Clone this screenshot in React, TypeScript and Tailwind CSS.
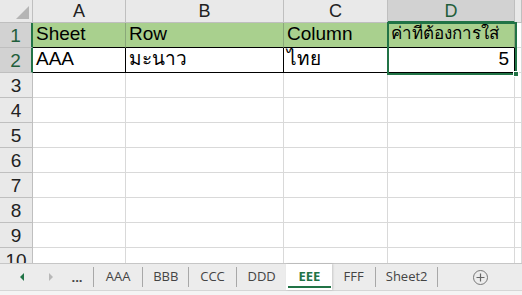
import React from "react";

const FONT = { fontFamily: '"Liberation Sans", "Noto Sans", "DejaVu Sans", sans-serif' };

const cols = ["A", "B", "C", "D", ""];

function ColHeader({ label, active }: { label: string; active?: boolean }) {
  return (
    <div
      className={
        "flex items-center justify-center border-r border-[#bfbfbf] text-[18px] leading-none " +
        (active
          ? "bg-[#d2d2d2] text-[#1f5e3b] border-b-2 border-b-[#217346]"
          : "bg-[#e9e9e9] text-[#222] border-b border-b-[#bfbfbf]")
      }
    >
      {label}
    </div>
  );
}

function RowHeader({ n, active }: { n: number; active?: boolean }) {
  return (
    <div
      className={
        "flex items-center justify-center border-b border-[#bfbfbf] text-[19px] leading-none " +
        (active
          ? "bg-[#d2d2d2] text-[#1f5e3b] border-r-2 border-r-[#217346]"
          : "bg-[#e9e9e9] text-[#222] border-r border-r-[#bfbfbf]")
      }
    >
      {n}
    </div>
  );
}

function Sheet() {
  const rows = [3, 4, 5, 6, 7, 8, 9, 10];
  const head = [
    { t: "Sheet", s: "text-[19px]" },
    { t: "Row", s: "text-[19px]" },
    { t: "Column", s: "text-[19px]" },
    { t: "ค่าที่ต้องการใส่", s: "text-[17px]" },
  ];
  return (
    <div className="relative h-[263px] overflow-hidden bg-white" style={FONT}>
      <div className="grid grid-cols-[33px_93px_158px_104px_127px_1fr] grid-rows-[23px_repeat(10,25px)]">
        {/* corner */}
        <div className="relative bg-[#e9e9e9] border-r border-b border-[#bfbfbf]">
          <div className="absolute right-[3px] bottom-[3px] w-0 h-0 border-l-[13px] border-l-transparent border-b-[13px] border-b-[#b5b5b5]" />
        </div>
        {cols.map((c) => (
          <ColHeader key={c || "E"} label={c} active={c === "D"} />
        ))}

        {/* row 1 */}
        <RowHeader n={1} active />
        {head.map((h) => (
          <div
            key={h.t}
            className={
              "flex items-end pb-[2px] pl-[3px] bg-[#a9d08e] border-r border-b border-r-[#8aa879] border-b-black leading-[22px] text-black whitespace-nowrap overflow-hidden " +
              h.s
            }
          >
            {h.t}
          </div>
        ))}
        <div className="border-r border-b border-[#d9d9d9]" />

        {/* row 2 */}
        <RowHeader n={2} active />
        {["AAA", "มะนาว", "ไทย"].map((t) => (
          <div
            key={t}
            className="flex items-end pb-[2px] pl-[3px] border-r border-b border-black text-[19px] leading-[22px] text-black whitespace-nowrap"
          >
            {t}
          </div>
        ))}
        <div className="flex items-end justify-end pb-[2px] pr-[5px] border-r border-b border-black text-[19px] leading-[22px] text-black">
          5
        </div>
        <div className="border-r border-b border-[#d9d9d9]" />

        {rows.map((r) => (
          <React.Fragment key={r}>
            <RowHeader n={r} />
            {[0, 1, 2, 3, 4].map((i) => (
              <div key={i} className="border-r border-b border-[#d9d9d9]" />
            ))}
          </React.Fragment>
        ))}
      </div>

      {/* selection D1:D2 */}
      <div className="absolute left-[387px] top-[22px] w-[130px] h-[53px] border-2 border-[#217346] pointer-events-none" />
      <div className="absolute left-[513px] top-[71px] w-[6px] h-[6px] bg-[#217346] border border-white" />
    </div>
  );
}

function Sep() {
  return <div className="w-px h-[20px] bg-[#a8a8a8]" />;
}

function Tab({ label, w }: { label: string; w: string }) {
  return (
    <div className={"flex items-center justify-center h-full text-[#444] " + w}>{label}</div>
  );
}

function TabBar() {
  return (
    <div style={{ fontFamily: '"Open Sans", "Noto Sans", sans-serif' }}>
      <div className="flex items-center h-[27px] bg-[#ececec] border-t border-[#c6c6c6] text-[13px]">
        <div className="flex items-center justify-center w-[46px]">
          <div className="w-0 h-0 border-y-[4px] border-y-transparent border-r-[4px] border-r-[#217346]" />
        </div>
        <div className="flex items-center justify-center w-[12px]">
          <div className="w-0 h-0 border-y-[4px] border-y-transparent border-l-[4px] border-l-[#b8b8b8]" />
        </div>
        <div className="w-[37px] pl-[15px] font-bold text-[#444] leading-none">...</div>
        <Sep />
        <Tab label="AAA" w="w-[50px]" />
        <Sep />
        <Tab label="BBB" w="w-[46px]" />
        <Sep />
        <Tab label="CCC" w="w-[48px]" />
        <Sep />
        <Tab label="DDD" w="w-[51px]" />
        <div className="relative flex items-center justify-center w-[47px] h-full bg-white font-bold text-[#217346] shadow-[1px_0_2px_rgba(0,0,0,0.15)]">
          EEE
          <div className="absolute left-[2px] right-[1px] bottom-[2px] h-[2px] bg-[#217346]" />
        </div>
        <Tab label="FFF" w="w-[44px]" />
        <Sep />
        <Tab label="Sheet2" w="w-[63px]" />
        <Sep />
        <div className="flex items-center justify-center w-[86px]">
          <div className="flex items-center justify-center w-[15px] h-[15px] rounded-full border border-[#777] text-[#666]">
            <svg width="9" height="9" viewBox="0 0 9 9">
              <path d="M4.5 0.5v8M0.5 4.5h8" stroke="#666" strokeWidth="1.2" />
            </svg>
          </div>
        </div>
      </div>
      <div className="h-[5px] bg-[#f4f4f4] border-t border-[#d6d6d6]" />
    </div>
  );
}

export default function App() {
  return (
    <div className="w-[522px] h-[295px] overflow-hidden bg-white">
      <Sheet />
      <TabBar />
    </div>
  );
}
